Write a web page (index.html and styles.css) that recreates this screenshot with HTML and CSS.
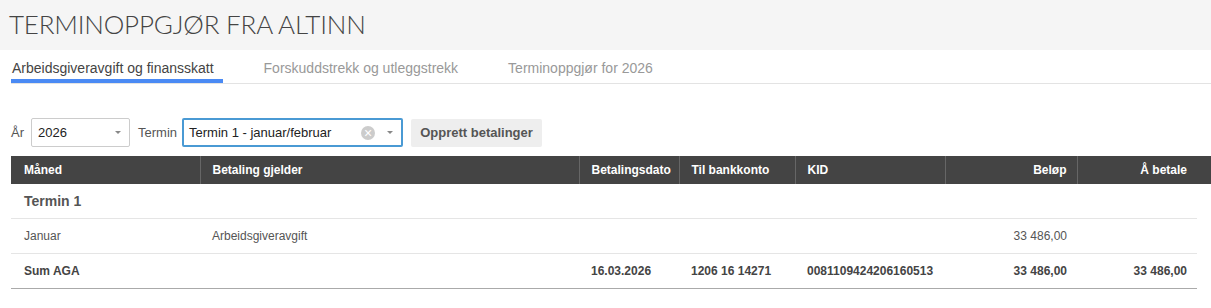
FILE: index.html
```html
<!DOCTYPE html>
<html lang="no">
<head>
    <meta charset="UTF-8">
    <title>Terminoppgjør fra Altinn</title>
    <link rel="stylesheet" href="styles.css">
</head>
<body>
    <header class="page-header">
        <h1>TERMINOPPGJØR FRA ALTINN</h1>
    </header>

    <nav class="tabs">
        <a class="tab active">Arbeidsgiveravgift og finansskatt</a>
        <a class="tab">Forskuddstrekk og utleggstrekk</a>
        <a class="tab">Terminoppgjør for 2026</a>
    </nav>

    <div class="filters">
        <label>År</label>
        <div class="select year-select">
            <span class="value">2026</span>
            <span class="arrow"></span>
        </div>
        <label>Termin</label>
        <div class="select term-select focused">
            <span class="value">Termin 1 - januar/februar</span>
            <span class="clear">&times;</span>
            <span class="arrow"></span>
        </div>
        <button class="btn">Opprett betalinger</button>
    </div>

    <table class="payments">
        <colgroup>
            <col style="width: 189px">
            <col style="width: 379px">
            <col style="width: 100px">
            <col style="width: 116px">
            <col style="width: 150px">
            <col style="width: 132px">
            <col style="width: 120px">
            <col style="width: 14px">
        </colgroup>
        <thead>
            <tr>
                <th>Måned</th>
                <th>Betaling gjelder</th>
                <th>Betalingsdato</th>
                <th>Til bankkonto</th>
                <th>KID</th>
                <th class="num">Beløp</th>
                <th class="num">Å betale</th>
                <th class="gutter"></th>
            </tr>
        </thead>
        <tbody>
            <tr class="group">
                <td colspan="7">Termin 1</td>
                <td class="gutter"></td>
            </tr>
            <tr>
                <td>Januar</td>
                <td>Arbeidsgiveravgift</td>
                <td></td>
                <td></td>
                <td></td>
                <td class="num">33 486,00</td>
                <td></td>
                <td class="gutter"></td>
            </tr>
            <tr class="sum">
                <td>Sum AGA</td>
                <td></td>
                <td>16.03.2026</td>
                <td>1206 16 14271</td>
                <td>0081109424206160513</td>
                <td class="num">33 486,00</td>
                <td class="num">33 486,00</td>
                <td class="gutter"></td>
            </tr>
        </tbody>
    </table>
</body>
</html>
```

FILE: styles.css
```css
/* General */
body {
    margin: 0;
    font-family: 'Liberation Sans', Arial, sans-serif;
    color: #444;
    background-color: #fff;
}

.page-header {
    background-color: #f5f5f5;
    height: 50px;
    padding: 0 0 2px 9px;
    box-sizing: border-box;
    display: flex;
    align-items: center;
}

.page-header h1 {
    margin: 0;
    font-family: 'Lato', sans-serif;
    font-weight: 300;
    font-size: 26px;
    letter-spacing: -0.2px;
    color: #444;
}

/* Tabs */
.tabs {
    display: flex;
    gap: 40px;
    margin-left: 11px;
    padding-top: 10px;
    border-bottom: 1px solid #e3e3e3;
}

.tab {
    font-size: 14px;
    line-height: 16px;
    color: #999;
    padding: 0 9px 3px 1px;
    border-bottom: 4px solid transparent;
    cursor: pointer;
}

.tab.active {
    color: #444;
    border-bottom-color: #4a8af4;
}

/* Filters */
.filters {
    display: flex;
    align-items: center;
    margin: 34px 0 0 11px;
    font-size: 13px;
}

.filters label {
    color: #555;
    margin-right: 7px;
}

.select {
    display: flex;
    align-items: center;
    border: 1px solid #ccc;
    border-radius: 2px;
    padding: 0 8px 0 6px;
    box-sizing: border-box;
    height: 29px;
    color: #222;
    margin-right: 8px;
}

.select .value {
    flex: 1;
}

.select .arrow {
    width: 0;
    height: 0;
    border-left: 3px solid transparent;
    border-right: 3px solid transparent;
    border-top: 3px solid #888;
}

.year-select {
    width: 99px;
}

.term-select {
    width: 221px;
    margin-left: -2px;
}

.select.focused {
    border: 2px solid #4a9ad4;
    padding-left: 5px;
}

.select .clear {
    width: 14px;
    height: 14px;
    border-radius: 50%;
    background-color: #ccc;
    color: #fff;
    font-size: 14px;
    line-height: 14px;
    text-align: center;
    margin-right: 12px;
}

.btn {
    height: 28px;
    width: 131px;
    border: none;
    border-radius: 2px;
    background-color: #eee;
    color: #555;
    font-family: inherit;
    font-weight: bold;
    font-size: 13px;
    cursor: pointer;
}

/* Table */
.payments {
    margin: 9px 0 0 11px;
    width: 1200px;
    table-layout: fixed;
    border-collapse: collapse;
    font-size: 12px;
}

.payments th {
    background-color: #444;
    color: #fff;
    font-weight: bold;
    text-align: left;
    height: 28px;
    padding: 0 12px;
    border-left: 1px solid #666;
}

.payments th:first-child {
    border-left: none;
    padding-left: 13px;
}

.payments th.gutter {
    border-left: none;
    padding: 0;
}

.payments td {
    height: 34px;
    padding: 0 12px;
    color: #555;
    border-bottom: 1px solid #e5e5e5;
}

.payments td:first-child {
    padding-left: 13px;
}

.payments td.gutter {
    border-bottom: none;
    padding: 0;
}

.payments .num {
    text-align: right;
    padding-right: 10px;
}

.payments tr.group td {
    font-weight: bold;
    font-size: 14px;
}

.payments tr.sum td {
    font-weight: bold;
    color: #444;
    border-bottom: 1px solid #aaa;
}

.payments tr.sum td.gutter {
    border-bottom: none;
}
```
